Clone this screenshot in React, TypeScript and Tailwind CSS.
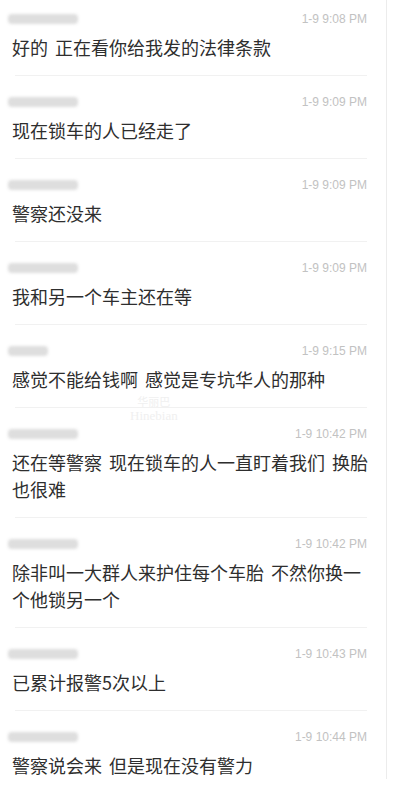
import React from 'react'

type Message = {
  nameWidth: number
  time: string
  text: string
}

const messages: Message[] = [
  { nameWidth: 70, time: '1-9 9:08 PM', text: '好的 正在看你给我发的法律条款' },
  { nameWidth: 70, time: '1-9 9:09 PM', text: '现在锁车的人已经走了' },
  { nameWidth: 70, time: '1-9 9:09 PM', text: '警察还没来' },
  { nameWidth: 70, time: '1-9 9:09 PM', text: '我和另一个车主还在等' },
  { nameWidth: 40, time: '1-9 9:15 PM', text: '感觉不能给钱啊 感觉是专坑华人的那种' },
  { nameWidth: 70, time: '1-9 10:42 PM', text: '还在等警察 现在锁车的人一直盯着我们 换胎也很难' },
  { nameWidth: 70, time: '1-9 10:42 PM', text: '除非叫一大群人来护住每个车胎 不然你换一个他锁另一个' },
  { nameWidth: 70, time: '1-9 10:43 PM', text: '已累计报警5次以上' },
  { nameWidth: 70, time: '1-9 10:44 PM', text: '警察说会来 但是现在没有警力' },
]

const cjk = "font-['Noto_Sans_CJK_SC','Noto_Sans',sans-serif]"

export default function App() {
  return (
    <div className="relative w-[405px] h-[800px] bg-white overflow-hidden">
      <div className="w-[387px] border-r border-[#ececec]">
        {messages.map((m, idx) => (
          <div
            key={idx}
            className={idx === 0 ? 'pt-[11px] pl-3 pr-[19px]' : 'pt-[18px] pl-3 pr-[19px]'}
          >
            <div className="flex h-4 items-center justify-between">
              {/* blurred nickname */}
              <div
                className="-ml-1 h-[10px] rounded-sm bg-[#dedede] blur-[1.5px]"
                style={{ width: m.nameWidth }}
              />
              <span className="font-['Liberation_Sans',sans-serif] text-[12px] leading-4 text-[#c2c2c2]">
                {m.time}
              </span>
            </div>
            <div
              className={`mt-[7px] mr-[-6px] ${cjk} text-[18px] leading-[27px] text-[#2e2e2e] [word-spacing:3px]`}
            >
              {m.text}
            </div>
            {idx < messages.length - 1 && (
              <div className="mt-[14px] ml-[3px] h-px bg-[#f1f1f1]" />
            )}
          </div>
        ))}
      </div>

      {/* faint watermark */}
      <div className="pointer-events-none absolute left-[130px] top-[396px] flex flex-col items-center gap-[2px] leading-none text-[#f0f0f0]">
        <span className={`${cjk} text-[11px]`}>华丽巴</span>
        <span className="font-['Liberation_Serif',serif] text-[13px]">Hinebian</span>
      </div>
    </div>
  )
}
